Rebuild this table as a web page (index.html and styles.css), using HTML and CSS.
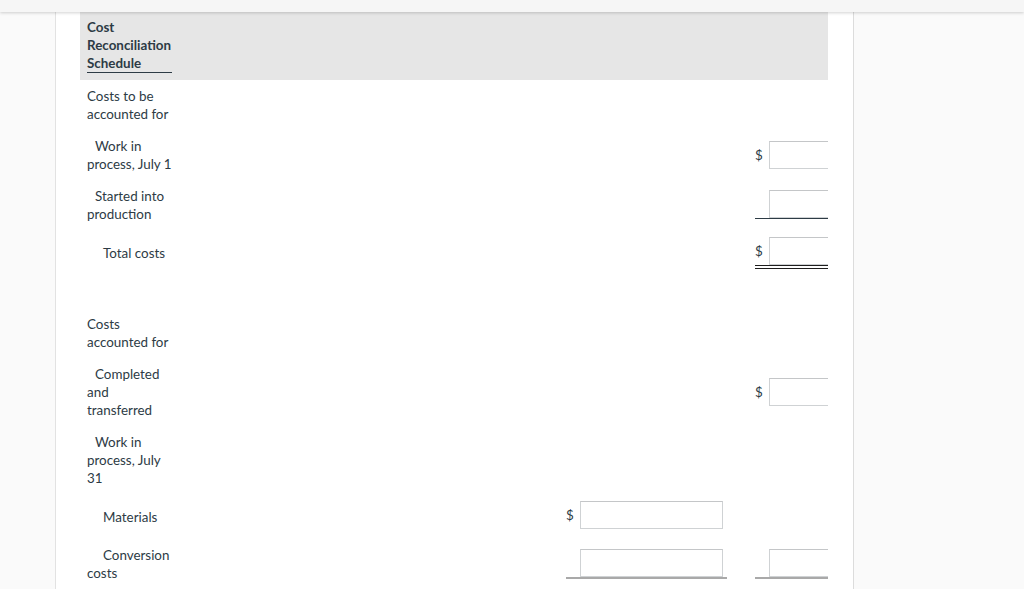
FILE: index.html
```html
<!DOCTYPE html>
<html>
<head>
<meta charset="utf-8">
<link rel="stylesheet" href="styles.css">
</head>
<body>
<div class="topbar"></div>
<div class="panel">
  <div class="clip">
    <table class="sched">
      <colgroup>
        <col class="c-label"><col class="c-gap"><col class="c-mid"><col class="c-gap2"><col class="c-right">
      </colgroup>
      <tr class="head">
        <td><div class="title">Cost Reconciliation Schedule</div></td>
        <td></td><td></td><td></td><td></td>
      </tr>
      <tr>
        <td class="lbl"><div class="txt">Costs to be accounted for</div></td>
        <td></td><td></td><td></td><td></td>
      </tr>
      <tr>
        <td class="lbl"><div class="txt in1">Work in process, July 1</div></td>
        <td></td><td></td><td></td>
        <td class="num"><div class="fld plain"><span class="dol">$</span><input class="box" type="text"></div></td>
      </tr>
      <tr>
        <td class="lbl"><div class="txt in1">Started into production</div></td>
        <td></td><td></td><td></td>
        <td class="num"><div class="fld single"><span class="dol"></span><input class="box" type="text"></div></td>
      </tr>
      <tr>
        <td class="lbl"><div class="txt in2">Total costs</div></td>
        <td></td><td></td><td></td>
        <td class="num"><div class="fld double"><span class="dol">$</span><input class="box" type="text"></div></td>
      </tr>
      <tr>
        <td class="lbl"><div class="txt">&nbsp;</div></td>
        <td></td><td></td><td></td><td></td>
      </tr>
      <tr>
        <td class="lbl"><div class="txt">Costs accounted for</div></td>
        <td></td><td></td><td></td><td></td>
      </tr>
      <tr>
        <td class="lbl"><div class="txt in1">Completed and transferred</div></td>
        <td></td><td></td><td></td>
        <td class="num"><div class="fld plain"><span class="dol">$</span><input class="box" type="text"></div></td>
      </tr>
      <tr>
        <td class="lbl"><div class="txt in1">Work in process, July 31</div></td>
        <td></td><td></td><td></td><td></td>
      </tr>
      <tr>
        <td class="lbl"><div class="txt in2">Materials</div></td>
        <td></td>
        <td class="num"><div class="fld none"><span class="dol">$</span><input class="box" type="text"></div></td>
        <td></td><td></td>
      </tr>
      <tr>
        <td class="lbl"><div class="txt in2">Conversion costs</div></td>
        <td></td>
        <td class="num"><div class="fld gray"><span class="dol"></span><input class="box" type="text"></div></td>
        <td></td>
        <td class="num"><div class="fld gray"><span class="dol"></span><input class="box" type="text"></div></td>
      </tr>
    </table>
  </div>
</div>
</body>
</html>
```
FILE: styles.css
```css
html, body {
  margin: 0;
  padding: 0;
}
body {
  background: #fafafa;
  font-family: Lato, "Open Sans", sans-serif;
  font-size: 13.4px;
  line-height: 18px;
  color: #2d3b45;
  height: 589px;
  overflow: hidden;
}
.topbar {
  height: 12px;
  background: #f6f6f6;
  box-shadow: 0 1px 3px rgba(0, 0, 0, 0.18);
  position: relative;
  z-index: 2;
}
.panel {
  margin-left: 55px;
  width: 799px;
  min-height: 600px;
  background: #ffffff;
  border-left: 1px solid #e2e2e2;
  border-right: 1px solid #dcdcdc;
  padding: 0 25px 0 24px;
  box-sizing: border-box;
}
.clip {
  width: 748px;
  overflow: hidden;
}
.sched {
  table-layout: fixed;
  width: 1000px;
  border-collapse: collapse;
  border-spacing: 0;
}
.c-label { width: 100px; }
.c-gap { width: 386px; }
.c-mid { width: 161px; }
.c-gap2 { width: 28px; }
.c-right { width: 325px; }
.sched td {
  padding: 7px 0;
  vertical-align: middle;
}
.sched td.lbl {
  padding: 7px 7px;
}
.head td {
  background: #e6e6e6;
  padding: 6px 0 7px;
}
.head td:first-child {
  padding: 6px 7px 7px;
}
.title {
  width: 85px;
  font-weight: bold;
  border-bottom: 1px solid #2d3b45;
}
.txt {
  width: 88px;
}
.in1 { text-indent: 8px; }
.in2 { text-indent: 16px; }
.fld {
  display: flex;
  align-items: center;
  width: 161px;
  box-sizing: border-box;
  padding-right: 3px;
}
.dol {
  width: 14px;
  flex: none;
}
.box {
  width: 143px;
  height: 28px;
  box-sizing: border-box;
  border: 1px solid #cfd2d4;
  border-top-color: #c4c6c8;
  border-radius: 0;
  margin: 0;
  padding: 0 4px;
  background: #fff;
  font: inherit;
  flex: none;
}
.num:last-child .fld {
  width: 300px;
}
.plain { border-bottom: 0; }
.none { border-bottom: 3px solid transparent; }
.single { border-bottom: 1px solid #2d3b45; margin-bottom: 2px; }
.double { border-bottom: 4px double #1e1e1e; }
.gray { border-bottom: 2px solid #a9a9a9; margin-bottom: 1px; }
```
